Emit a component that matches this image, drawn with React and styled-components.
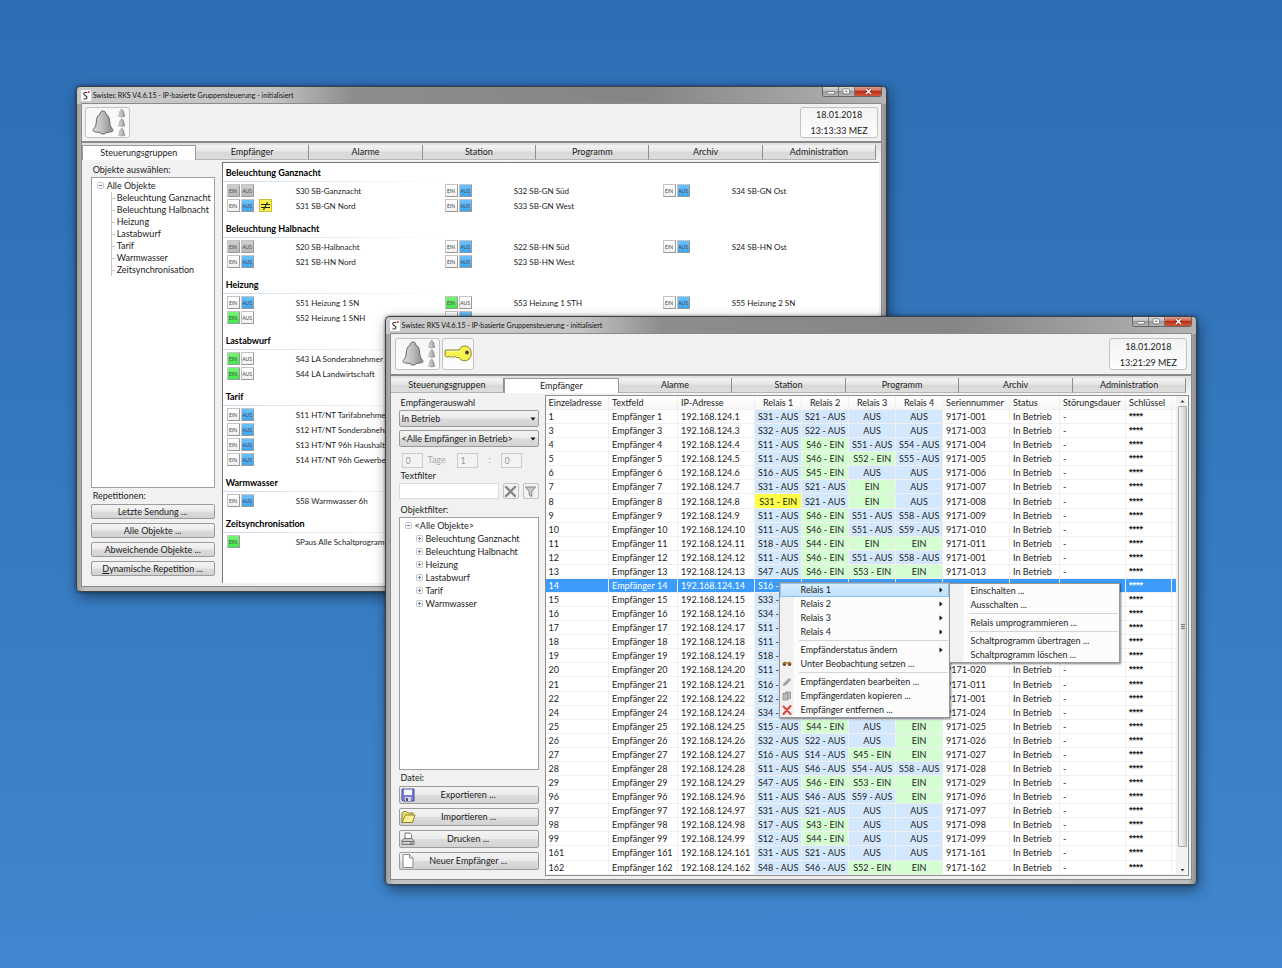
import React, { useState } from 'react'
import styled, { createGlobalStyle, css } from 'styled-components';

const tabs = ['Steuerungsgruppen', 'Empfänger', 'Alarme', 'Station', 'Programm', 'Archiv', 'Administration'];
const objects = ['Beleuchtung Ganznacht', 'Beleuchtung Halbnacht', 'Heizung', 'Lastabwurf', 'Tarif', 'Warmwasser'];

// state: 'aus' | 'ein' | 'off' (both grey) | 'single' (only EIN)
const groups = [
    { title: 'Beleuchtung Ganznacht', items: [
        ['S30 SB-Ganznacht', 'off'], ['S32 SB-GN Süd', 'aus'], ['S34 SB-GN Ost', 'aus'],
        ['S31 SB-GN Nord', 'aus', true], ['S33 SB-GN West', 'aus'],
    ] },
    { title: 'Beleuchtung Halbnacht', items: [
        ['S20 SB-Halbnacht', 'off'], ['S22 SB-HN Süd', 'aus'], ['S24 SB-HN Ost', 'aus'],
        ['S21 SB-HN Nord', 'aus'], ['S23 SB-HN West', 'aus'],
    ] },
    { title: 'Heizung', items: [
        ['S51 Heizung 1 SN', 'aus'], ['S53 Heizung 1 STH', 'ein'], ['S55 Heizung 2 SN', 'aus'],
        ['S52 Heizung 1 SNH', 'ein'], ['', 'aus'],
    ] },
    { title: 'Lastabwurf', single: true, items: [['S43 LA Sonderabnehmer', 'ein'], ['S44 LA Landwirtschaft', 'ein']] },
    { title: 'Tarif', single: true, items: [
        ['S11 HT/NT Tarifabnehmer', 'aus'], ['S12 HT/NT Sonderabnehmer', 'aus'],
        ['S13 HT/NT 96h Haushalt', 'aus'], ['S14 HT/NT 96h Gewerbe', 'aus'],
    ] },
    { title: 'Warmwasser', single: true, items: [['S58 Warmwasser 6h', 'aus']] },
    { title: 'Zeitsynchronisation', single: true, items: [['SPaus Alle Schaltprogramme', 'single']] },
];

const receivers = [
    [1, '001', 'S31 - AUS', 'S21 - AUS', 'AUS', 'AUS'],
    [3, '003', 'S32 - AUS', 'S22 - AUS', 'AUS', 'AUS'],
    [4, '004', 'S11 - AUS', 'S46 - EIN', 'S51 - AUS', 'S54 - AUS'],
    [5, '005', 'S11 - AUS', 'S46 - EIN', 'S52 - EIN', 'S55 - AUS'],
    [6, '006', 'S16 - AUS', 'S45 - EIN', 'AUS', 'AUS'],
    [7, '007', 'S31 - AUS', 'S21 - AUS', 'EIN', 'AUS'],
    [8, '008', 'S31 - EIN', 'S21 - AUS', 'EIN', 'AUS'],
    [9, '009', 'S11 - AUS', 'S46 - EIN', 'S51 - AUS', 'S58 - AUS'],
    [10, '010', 'S11 - AUS', 'S46 - EIN', 'S51 - AUS', 'S59 - AUS'],
    [11, '011', 'S18 - AUS', 'S44 - EIN', 'EIN', 'EIN'],
    [12, '001', 'S11 - AUS', 'S46 - EIN', 'S51 - AUS', 'S58 - AUS'],
    [13, '013', 'S47 - AUS', 'S46 - EIN', 'S53 - EIN', 'EIN'],
    [14, '', 'S16 - AUS', '', '', ''],
    [15, '', 'S33 - AUS', '', '', ''],
    [16, '', 'S34 - AUS', '', '', ''],
    [17, '', 'S11 - AUS', '', '', ''],
    [18, '', 'S11 - AUS', '', '', ''],
    [19, '', 'S18 - AUS', '', '', ''],
    [20, '020', 'S11 - AUS', '', '', ''],
    [21, '011', 'S16 - AUS', '', '', ''],
    [22, '001', 'S12 - AUS', '', '', ''],
    [24, '024', 'S34 - AUS', '', '', ''],
    [25, '025', 'S15 - AUS', 'S44 - EIN', 'AUS', 'EIN'],
    [26, '026', 'S32 - AUS', 'S22 - AUS', 'AUS', 'EIN'],
    [27, '027', 'S16 - AUS', 'S14 - AUS', 'S45 - EIN', 'EIN'],
    [28, '028', 'S11 - AUS', 'S46 - AUS', 'S54 - AUS', 'S58 - AUS'],
    [29, '029', 'S47 - AUS', 'S46 - EIN', 'S53 - EIN', 'EIN'],
    [96, '096', 'S11 - AUS', 'S46 - AUS', 'S59 - AUS', 'EIN'],
    [97, '097', 'S31 - AUS', 'S21 - AUS', 'AUS', 'AUS'],
    [98, '098', 'S17 - AUS', 'S43 - EIN', 'AUS', 'AUS'],
    [99, '099', 'S12 - AUS', 'S44 - EIN', 'AUS', 'AUS'],
    [161, '161', 'S31 - AUS', 'S21 - AUS', 'AUS', 'AUS'],
    [162, '162', 'S48 - AUS', 'S46 - AUS', 'S52 - EIN', 'EIN'],
];

function App() {
    return (
        <>
            <GlobalStyle />
            <Desktop>
                <GroupWindow />
                <ReceiverWindow />
            </Desktop>
        </>
    )
}

const TitleBar = () => (
    <Title>
        <AppIcon />
        <TitleText>Swistec RKS V4.6.15 - IP-basierte Gruppensteuerung - initialisiert</TitleText>
        <Controls>
            <Control aria-label='Minimieren'>
                <svg width='10' height='6'><rect x='1.5' y='2.5' width='7' height='2.5' rx='0.5' fill='#fff' stroke='#666' strokeWidth='0.7' /></svg>
            </Control>
            <Control aria-label='Maximieren'>
                <svg width='9' height='7'><rect x='1' y='0.8' width='6.5' height='5' rx='1' fill='#fff' stroke='#666' strokeWidth='0.7' /><rect x='3' y='2.6' width='2.5' height='1.4' fill='#888' /></svg>
            </Control>
            <Control $close aria-label='Schließen'>
                <svg width='9' height='7' viewBox='0 0 9 7'>
                    <path d='M2 1l5 5M7 1L2 6' stroke='#7c2416' strokeWidth='2.8' />
                    <path d='M2 1l5 5M7 1L2 6' stroke='#fff' strokeWidth='1.6' />
                </svg>
            </Control>
        </Controls>
    </Title>
)

const TabBar = ({ initial }) => {
    const [active, setActive] = useState(initial)
    return (
        <Tabs role='tablist'>
            {tabs.map((name) => (
                <Tab key={name} role='tab' aria-selected={active === name} $active={active === name} onClick={() => setActive(name)}>{name}</Tab>
            ))}
        </Tabs>
    )
}

const Clock = ({ time }) => (
    <ClockBox>
        <span>18.01.2018</span>
        <span>{time} MEZ</span>
    </ClockBox>
)

function GroupWindow() {
    return (
        <BackWindow>
            <TitleBar />
            <Client>
                <Toolbar>
                    <ToolButton $wide aria-label='Alarme'><BellIcon /></ToolButton>
                    <Clock time='13:13:33' />
                </Toolbar>
                <TabBar initial='Steuerungsgruppen' />
                <Body>
                    <Side>
                        <Label as='h2'>Objekte auswählen:</Label>
                        <TreeBox>
                            <TreeRoot><Expander />Alle Objekte</TreeRoot>
                            <TreeList>
                                {[...objects, 'Zeitsynchronisation'].map((el) => <TreeLeaf key={el}>{el}</TreeLeaf>)}
                            </TreeList>
                        </TreeBox>
                        <Label as='h2'>Repetitionen:</Label>
                        <ButtonStack>
                            <PushButton>Letzte Sendung ...</PushButton>
                            <PushButton>Alle Objekte ...</PushButton>
                            <PushButton>Abweichende Objekte ...</PushButton>
                            <PushButton><u>D</u>ynamische Repetition ...</PushButton>
                        </ButtonStack>
                    </Side>
                    <GroupPane>
                        {groups.map((group) => (
                            <section key={group.title}>
                                <GroupTitle>{group.title}</GroupTitle>
                                <GroupGrid $single={group.single}>
                                    {group.items.map((el, i) => <Switch key={i} props={el} />)}
                                </GroupGrid>
                            </section>
                        ))}
                    </GroupPane>
                </Body>
            </Client>
        </BackWindow>
    )
}

const Switch = (props) => {
    const [name, state, differs] = props.props;
    const ein = state === 'ein' || state === 'single' ? 'green' : state === 'off' ? 'grey' : 'white';
    const aus = state === 'aus' ? 'blue' : state === 'off' ? 'grey' : 'white';
    return (
        <SwitchItem>
            <SwitchKeys>
                <Key $tone={ein}>EIN</Key>
                {state !== 'single' && <Key $tone={aus}>AUS</Key>}
                {differs && (
                    <Differs>
                        <svg width='11' height='10' viewBox='0 0 11 10'><path d='M1 3.5h9M1 6.5h9M7.5 1L3.5 9' fill='none' stroke='#222' strokeWidth='1.1' /></svg>
                    </Differs>
                )}
            </SwitchKeys>
            <span>{name}</span>
        </SwitchItem>
    )
}

function ReceiverWindow() {
    const [text, setText] = useState('')
    const [selected, setSelected] = useState(14)

    return (
        <FrontWindow>
            <TitleBar />
            <Client>
                <Toolbar $tall>
                    <ToolButton $wide aria-label='Alarme'><BellIcon /></ToolButton>
                    <ToolButton aria-label='Schlüssel'><KeyIcon /></ToolButton>
                    <Clock time='13:21:29' />
                </Toolbar>
                <TabBar initial='Empfänger' />
                <Body>
                    <Side $wide>
                        <Label htmlFor='auswahl'>Empfängerauswahl</Label>
                        <SelectBox>
                            <select id='auswahl'><option>In Betrieb</option></select>
                            <Caret />
                        </SelectBox>
                        <SelectBox>
                            <select aria-label='Empfänger'><option>&lt;Alle Empfänger in Betrieb&gt;</option></select>
                            <Caret />
                        </SelectBox>
                        <DurationRow>
                            <input aria-label='Tage' defaultValue='0' disabled />
                            <span>Tage</span>
                            <input aria-label='Stunden' defaultValue='1' disabled />
                            <span>:</span>
                            <input aria-label='Minuten' defaultValue='0' disabled />
                        </DurationRow>
                        <Label htmlFor='textfilter'>Textfilter</Label>
                        <FilterRow>
                            <input id='textfilter' type='text' value={text} onChange={(e) => setText(e.target.value)} />
                            <IconButton aria-label='Filter löschen' onClick={() => setText('')}>
                                <svg width='13' height='13' viewBox='0 0 13 13'><path d='M2 2l9 9M11 2l-9 9' stroke='#858585' strokeWidth='2.4' strokeLinecap='round' /></svg>
                            </IconButton>
                            <IconButton aria-label='Filtern'>
                                <svg width='13' height='13' viewBox='0 0 13 13'><path d='M1.5 2h10L7.8 6.5v5l-2.6-1.5V6.5z' fill='#c9c9c9' stroke='#858585' /></svg>
                            </IconButton>
                        </FilterRow>
                        <Label as='h2'>Objektfilter:</Label>
                        <TreeBox>
                            <TreeRoot><Expander />&lt;Alle Objekte&gt;</TreeRoot>
                            <TreeList $open>
                                {objects.map((el) => <TreeLeaf $open key={el}><Expander plus />{el}</TreeLeaf>)}
                            </TreeList>
                        </TreeBox>
                        <Label as='h2'>Datei:</Label>
                        <ButtonStack $wide>
                            <PushButton><DiskIcon /><span>Exportieren ...</span></PushButton>
                            <PushButton><FolderIcon /><span>Importieren ...</span></PushButton>
                            <PushButton><PrinterIcon /><span>Drucken ...</span></PushButton>
                            <PushButton><PageIcon /><span>Neuer Empfänger ...</span></PushButton>
                        </ButtonStack>
                    </Side>
                    <TablePane>
                        <Table>
                            <colgroup>
                                {[63, 69, 77, 47, 47, 47, 47, 67, 50, 66, 46].map((w, i) => <col key={i} width={w} />)}
                                <col />
                            </colgroup>
                            <thead>
                                <tr>
                                    <th>Einzeladresse</th><th>Textfeld</th><th>IP-Adresse</th>
                                    <th className='relay'>Relais 1</th><th className='relay'>Relais 2</th>
                                    <th className='relay'>Relais 3</th><th className='relay'>Relais 4</th>
                                    <th>Seriennummer</th><th>Status</th><th>Störungsdauer</th><th>Schlüssel</th><th></th>
                                </tr>
                            </thead>
                            <tbody>
                                {receivers.map(([id, serial, ...relays]) => (
                                    <Row key={id} $selected={selected === id} onClick={() => setSelected(id)}>
                                        <td>{id}</td>
                                        <td>Empfänger {id}</td>
                                        <td>192.168.124.{id}</td>
                                        {relays.map((el, i) => (
                                            <RelayCell key={i} $ein={el.endsWith('EIN')} $warn={id === 8 && i === 0}>{el}</RelayCell>
                                        ))}
                                        <td>{serial && `9171-${serial}`}</td>
                                        <td>{serial && 'In Betrieb'}</td>
                                        <td>{serial && '-'}</td>
                                        <td className='secret'>****</td>
                                        <td></td>
                                    </Row>
                                ))}
                            </tbody>
                        </Table>
                        <ScrollBar>
                            <svg width='9' height='10'><path d='M2.5 6.5h4L4.5 4z' fill='#444' /></svg>
                            <Thumb><i /></Thumb>
                            <svg width='9' height='10'><path d='M2.5 4h4L4.5 6.5z' fill='#444' /></svg>
                        </ScrollBar>
                    </TablePane>
                </Body>
            </Client>
            <ContextMenu />
        </FrontWindow>
    )
}

const ContextMenu = () => (
    <>
        <Menu role='menu'>
            <MenuItem $hot>Relais 1<Arrow /></MenuItem>
            <MenuItem>Relais 2<Arrow /></MenuItem>
            <MenuItem>Relais 3<Arrow /></MenuItem>
            <MenuItem>Relais 4<Arrow /></MenuItem>
            <MenuLine />
            <MenuItem>Empfänderstatus ändern<Arrow /></MenuItem>
            <MenuItem><GlassesIcon />Unter Beobachtung setzen ...</MenuItem>
            <MenuLine />
            <MenuItem><PencilIcon />Empfängerdaten bearbeiten ...</MenuItem>
            <MenuItem><CopyIcon />Empfängerdaten kopieren ...</MenuItem>
            <MenuItem><DeleteIcon />Empfänger entfernen ...</MenuItem>
        </Menu>
        <Menu role='menu' $sub>
            <MenuItem>Einschalten ...</MenuItem>
            <MenuItem>Ausschalten ...</MenuItem>
            <MenuLine />
            <MenuItem>Relais umprogrammieren ...</MenuItem>
            <MenuLine />
            <MenuItem>Schaltprogramm übertragen ...</MenuItem>
            <MenuItem>Schaltprogramm löschen ...</MenuItem>
        </Menu>
    </>
)

// icons
const AppIcon = () => (
    <svg width='10' height='11' viewBox='0 0 10 11'>
        <rect width='10' height='11' rx='1' fill='#fff' />
        <path d='M6.2 2.8C4.5 1.7 2.3 2.5 2.8 4.2S6 5.7 6 7.5 4 9.3 2.5 8.7' fill='none' stroke='#333' strokeWidth='1.1' />
        <circle cx='7.8' cy='2' r='1.1' fill='#d33' />
    </svg>
)

const BellShape = ({ transform }) => (
    <path transform={transform} fill='url(#bell)' stroke='#666' strokeWidth='1'
        d='M11 1c1.8 0 3 1.2 2.8 3 3 1.5 3.7 4.5 3.9 8 .2 3.6 1 5 3 7.5.7 1-.2 2.2-1.4 2.3l-5.3.7c-.5 2-5.5 2-6 0l-5.300-.7C1.500 21.700.6 20.500 1.300 19.500c2-2.500 2.800-3.900 3-7.500.2-3.500.9-6.500 3.900-8C8 2.200 9.200 1 11 1z' />
)

const BellIcon = () => (
    <svg width='36' height='30' viewBox='0 0 36 30'>
        <defs>
            <linearGradient id='bell' x1='0' x2='1'>
                <stop offset='0' stopColor='#ddd' /><stop offset='0.5' stopColor='#bbb' /><stop offset='1' stopColor='#8c8c8c' />
            </linearGradient>
        </defs>
        <BellShape transform='translate(3 2)' />
        <BellShape transform='translate(29 1) scale(.34)' />
        <BellShape transform='translate(29 10.5) scale(.34)' />
        <BellShape transform='translate(29 20) scale(.34)' />
    </svg>
)

const KeyIcon = () => (
    <svg width='28' height='20' viewBox='0 0 28 20'>
        <path d='M15 6C16.5 1.8 22 .8 25 3.6c3 3 3 8.5 0 11.5-3 2.6-8.2 2.2-10-1.6h-2.5l-1.4-1.2-1.5 1.4-1.5-1.4-1.4 1.2-1.6-1.3-1.5 1.2L.8 11.5 1.5 6z' fill='#f8f250' stroke='#88852f' strokeWidth='1' />
        <path d='M2.5 7.5H16' stroke='#fdfbb0' />
        <circle cx='23' cy='8.5' r='2' fill='#444' />
    </svg>
)

const Expander = ({ plus }) => (
    <svg width='7' height='7' viewBox='0 0 7 7'>
        <rect x='0.5' y='0.5' width='6' height='6' rx='1' fill='#f8f8f8' stroke='#c4c4c4' />
        <path d={plus ? 'M2 3.5h3M3.5 2v3' : 'M2 3.5h3'} stroke='#6a7cae' />
    </svg>
)

const Caret = () => <svg width='6' height='4'><path d='M0.5 0.5h5L3 3.5z' fill='#111' /></svg>

const Arrow = () => <svg className='arrow' width='4' height='6'><path d='M0.5 0.5v5L3.5 3z' fill='#111' /></svg>

const DiskIcon = () => (
    <svg width='14' height='14' viewBox='0 0 14 14'>
        <path d='M1 1h12v12H2L1 12z' fill='#7c80d8' stroke='#4a4d9c' />
        <rect x='3' y='1.5' width='8' height='5.5' fill='#f4f5ff' />
        <rect x='4' y='9' width='6' height='4' fill='#dcdcdc' /><rect x='5' y='10' width='2' height='3' fill='#4a4d9c' />
    </svg>
)

const FolderIcon = () => (
    <svg width='15' height='14' viewBox='0 0 15 14'>
        <path d='M1 12.5V3l1.5-1.5h3L7 3h5v2' fill='#e8dd6c' stroke='#8e8432' />
        <path d='M1 12.5L4.5 5H14l-2.5 7.5z' fill='#f8f294' stroke='#8e8432' />
    </svg>
)

const PrinterIcon = () => (
    <svg width='14' height='14' viewBox='0 0 14 14'>
        <path d='M4 6.5V1h5l1.5 1.5v4' fill='#fff' stroke='#777' />
        <path d='M1 9l2-2.5h8L13 9v3.5H1z' fill='#c8c8c8' stroke='#777' />
        <path d='M1 9.5h12' stroke='#777' /><rect x='9' y='10.5' width='2.5' height='1.2' fill='#3b9c3b' />
    </svg>
)

const PageIcon = () => (
    <svg width='14' height='14' viewBox='0 0 14 14'>
        <path d='M2 0.5h6.5l3.5 3.5v9.5H2z' fill='#fff' stroke='#888' /><path d='M8.5 0.5V4H12' fill='#e6e6e6' stroke='#888' />
    </svg>
)

const GlassesIcon = () => (
    <svg className='icon' width='10' height='8' viewBox='0 0 10 8'>
        <path d='M1 4.5C1 2 3.5 2 4 3h2c.5-1 3-1 3 1.5' fill='none' stroke='#a8763c' strokeWidth='1.3' />
        <circle cx='2.5' cy='4.5' r='1.6' fill='#6c4a24' /><circle cx='7.5' cy='4.5' r='1.6' fill='#6c4a24' />
    </svg>
)

const PencilIcon = () => (
    <svg className='icon' width='10' height='10' viewBox='0 0 10 10'>
        <path d='M1.5 8.5l.5-2L7 1.5l1.5 1.5-5 5z' fill='#aaa' stroke='#777' strokeWidth='0.7' />
    </svg>
)

const CopyIcon = () => (
    <svg className='icon' width='10' height='10' viewBox='0 0 10 10'>
        <rect x='3.5' y='1' width='5' height='6.5' fill='#c4c4c4' stroke='#888' strokeWidth='0.7' />
        <rect x='1' y='2.5' width='5' height='6.5' fill='#bbb' stroke='#888' strokeWidth='0.7' />
    </svg>
)

const DeleteIcon = () => (
    <svg className='icon' width='10' height='10' viewBox='0 0 10 10'>
        <path d='M1.5 1.5l7 7.5M8.5 1L1.5 9' stroke='#dd4545' strokeWidth='2' strokeLinecap='round' />
    </svg>
)

export default App

const GlobalStyle = createGlobalStyle`
    *{
        box-sizing: border-box;
    }
    body{
        margin: 0;
        font-family: Lato, 'Liberation Sans', sans-serif;
        font-size: 9px;
        line-height: 14px;
        color: #1c1c1c;
    }
    button, input, select{
        font: inherit;
        color: inherit;
        margin: 0;
        padding: 0;
    }
    svg{
        display: block;
        flex: none;
    }
    h2, h3, ul{
        margin: 0;
        padding: 0;
        font-size: inherit;
        font-weight: normal;
        list-style: none;
    }
`
const Desktop = styled.main`
    position: relative;
    min-height: 100vh;
    overflow: hidden;
    background: linear-gradient(#2d6db3, #3478be 45%, #4087cf);
`
const Window = styled.section`
    position: absolute;
    border: 1px solid #3c4248;
    border-radius: 4px;
    padding: 0 4px 4px;
    background: linear-gradient(90deg, #c9c9c9, #c4c4c4 24%, #8d8d8d 34%, #858585 70%, #b4b4b4) 0 0 / 100% 17px no-repeat, linear-gradient(90deg, #9b9b9b, #c2c2c2 1%, #bdbdbd 99%, #8e8e8e);
    box-shadow: 0 0 3px rgba(0, 0, 0, 0.5), 2px 5px 14px rgba(0, 0, 0, 0.45);
`
const BackWindow = styled(Window)`
    left: 5.9vw;
    top: 86px;
    width: 63.3vw;
`
const FrontWindow = styled(Window)`
    left: 30vw;
    top: 316px;
    width: 63.4vw;
`
const Title = styled.header`
    display: flex;
    align-items: center;
    gap: 2px;
    height: 16px;
`
const TitleText = styled.span`
    flex: 1;
    font-size: 7px;
    color: #111;
`
const Controls = styled.div`
    display: flex;
    align-self: flex-start;
    border: 1px solid #666;
    border-top: 0;
    border-radius: 0 0 3px 3px;
    overflow: hidden;
`
const Control = styled.button`
    display: flex;
    align-items: center;
    justify-content: center;
    width: ${({$close}) => ($close ? '26px' : '16px')};
    height: 9px;
    border: 0;
    border-right: ${({$close}) => ($close ? '0' : '1px solid #777')};
    background: ${({$close}) => ($close
        ? 'linear-gradient(#e0a193, #cf5a45 45%, #bb2f18 50%, #d4573d)'
        : 'linear-gradient(#d6d6d6, #bcbcbc 45%, #9c9c9c 50%, #b4b4b4)')};
`
const Client = styled.div`
    border: 1px solid #8b8b8b;
    background: #f1f1f1;
`
const Toolbar = styled.div`
    display: flex;
    gap: 2px;
    height: ${({$tall}) => ($tall ? '42px' : '39px')};
    padding: ${({$tall}) => ($tall ? '4px' : '3px')};
    border-bottom: 2px solid #8a8a8a;
`
const ToolButton = styled.button`
    display: flex;
    align-items: center;
    justify-content: center;
    width: ${({$wide}) => ($wide ? '45px' : '32px')};
    border: 1px solid #c2c2c2;
    border-radius: 3px;
    background: linear-gradient(#f6f6f6, #fdfdfd);
`
const ClockBox = styled.div`
    display: flex;
    flex-direction: column;
    justify-content: center;
    align-items: center;
    width: 78px;
    margin-left: auto;
    padding-top: 1px;
    line-height: 16px;
    border: 1px solid #c2c2c2;
    border-radius: 3px;
    background: linear-gradient(#f3f3f3, #fdfdfd);
`
const Tabs = styled.div`
    display: flex;
    height: 19px;
    padding: 2px 5px 2px 0;
    background: linear-gradient(#e0e0e0, #f4f4f4);
`
const Tab = styled.button`
    flex: 1;
    border: 0;
    border-right: 1px solid #8f8f8f;
    border-bottom: 1px solid #b5b5b5;
    background: linear-gradient(#f3f3f3, #e6e6e6 45%, #d9d9d9 50%, #dcdcdc);
    ${({$active}) => $active && css`
        border: 1px solid #999;
        border-bottom: 0;
        background: #fff;
    `}
`
const Body = styled.div`
    display: flex;
    padding: 0 2px 3px 0;
`
const Side = styled.aside`
    display: flex;
    flex-direction: column;
    width: ${({$wide}) => ($wide ? '154px' : '140px')};
    padding: ${({$wide}) => ($wide ? '0 6px 6px 8px' : '0 7px 7px 9px')};
`
const Label = styled.label`
    display: block;
    padding-left: 2px;
    line-height: 15px;
`
const TreeBox = styled.div`
    flex: 1;
    padding: 1px 5px;
    border: 1px solid #9a9fa6;
    background: #fff;
`
const TreeRoot = styled.div`
    display: flex;
    align-items: center;
    gap: 3px;
    line-height: 13px;
`
const TreeList = styled.ul`
    margin-left: ${({$open}) => ($open ? '11px' : '14px')};
    line-height: ${({$open}) => ($open ? '13px' : '12px')};
    white-space: nowrap;
`
const TreeLeaf = styled.li`
    display: flex;
    align-items: center;
    gap: 3px;
    ${({$open}) => !$open && css`
        gap: 2px;
        border-left: 1px solid #c4c4c4;
        &::before{
            content: '';
            flex: none;
            width: 3px;
            border-top: 1px solid #c4c4c4;
        }
    `}
`
const ButtonStack = styled.div`
    display: flex;
    flex-direction: column;
    gap: 4px;
    padding-top: 1px;
    button{
        height: ${({$wide}) => ($wide ? '18px' : '15px')};
    }
`
const PushButton = styled.button`
    display: flex;
    align-items: center;
    justify-content: center;
    border: 1px solid #9b9b9b;
    border-radius: 2px;
    background: linear-gradient(#f4f4f4, #ebebeb 48%, #dcdcdc 52%, #d2d2d2);
    svg{
        margin-left: 1px;
    }
    span{
        flex: 1;
        padding-right: 16px;
    }
`
const GroupPane = styled.div`
    flex: 1;
    min-width: 0;
    min-height: 421px;
    padding-top: 3px;
    border-top: 1px solid #777;
    border-left: 1px solid #777;
    background: #fff;
`
const GroupTitle = styled.h3`
    height: 16px;
    padding-left: 3px;
    background: linear-gradient(90deg, #cfdcec, #fff 34%) left bottom / 100% 1px no-repeat;
    font-weight: bold;
    color: #000;
`
const GroupGrid = styled.div`
    display: grid;
    grid-template-columns: ${({$single}) => ($single ? '1fr' : '218px 218px 1fr')};
    grid-auto-rows: 15px;
    padding: 1px 0 9px 4px;
`
const SwitchItem = styled.div`
    display: flex;
    align-items: center;
    font-size: 8px;
    line-height: 16px;
    white-space: nowrap;
`
const SwitchKeys = styled.div`
    display: flex;
    gap: 1px;
    width: 69px;
`
const tones = {
    green: 'linear-gradient(#7af27a, #44e84a)',
    blue: 'linear-gradient(#6cc2fa, #3fa6f3)',
    grey: 'linear-gradient(#cfcfcf, #b9b9b9)',
    white: 'linear-gradient(#fff, #f0f0f0)',
}
const Key = styled.button`
    width: 13px;
    height: 13px;
    border: 1px solid #c4c4c4;
    border-right-color: #999;
    border-bottom-color: #999;
    border-radius: 1px;
    background: ${({$tone}) => tones[$tone]};
    font-size: 5px;
    line-height: 10px;
    color: #444;
`
const Differs = styled.span`
    display: flex;
    align-items: center;
    justify-content: center;
    width: 13px;
    height: 13px;
    margin-left: 4px;
    border: 1px solid #c9bd3c;
    background: #f8ef49;
`
const SelectBox = styled.div`
    position: relative;
    height: 17px;
    margin-bottom: 3px;
    select{
        width: 100%;
        height: 17px;
        padding-left: 2px;
        border: 1px solid #9b9b9b;
        border-radius: 2px;
        background: linear-gradient(#f4f4f4, #ebebeb 48%, #dcdcdc 52%, #d2d2d2);
        appearance: none;
    }
    svg{
        position: absolute;
        top: 7px;
        right: 3px;
    }
`
const DurationRow = styled.div`
    display: grid;
    grid-template-columns: 21px 34px 21px 23px 21px;
    padding: 3px 0 0 3px;
    color: #aaa;
    input{
        height: 15px;
        min-width: 0;
        padding-left: 3px;
        border: 1px solid #ccc;
        background: #f3f3f3;
        color: #999;
    }
    span{
        padding-left: 5px;
    }
    span:last-of-type{
        padding-left: 11px;
    }
`
const FilterRow = styled.div`
    display: flex;
    gap: 4px;
    margin-bottom: 3px;
    input{
        flex: 1;
        min-width: 0;
        height: 16px;
        border: 1px solid #dcdcdc;
        background: #fff;
    }
`
const IconButton = styled.button`
    display: flex;
    align-items: center;
    justify-content: center;
    width: 16px;
    height: 16px;
    border: 1px solid #c2c2c2;
    border-radius: 2px;
    background: #f2f2f2;
`
const TablePane = styled.div`
    display: flex;
    flex: 1;
    min-width: 0;
    border: 1px solid #8e8e8e;
    background: #fff;
`
const Table = styled.table`
    flex: 1;
    height: 479px;
    table-layout: fixed;
    border-collapse: collapse;
    line-height: 13px;
    white-space: nowrap;
    th, td{
        padding: 0 0 0 3px;
        border-right: 1px solid #f0f0f0;
        border-bottom: 1px solid #f0f0f0;
        font-weight: normal;
        text-align: left;
    }
    th{
        background: linear-gradient(#fff, #f6f6f6);
    }
    th.relay{
        padding: 0;
        text-align: center;
    }
    td.secret{
        font-family: 'Liberation Sans', sans-serif;
        font-weight: bold;
    }
`
const RelayCell = styled.td`
    && {
        padding: 0;
        text-align: center;
    }
    background: ${({$ein, $warn}) => ($warn ? '#ffff45' : $ein ? '#d5fdd2' : '#d3e8fd')};
`
const Row = styled.tr`
    ${({$selected}) => $selected && css`
        color: #fff;
        td{
            background: #3b9cfc;
        }
    `}
`
const ScrollBar = styled.div`
    display: flex;
    flex-direction: column;
    width: 11px;
    padding: 0 1px;
    background: #f3f3f3;
`
const Thumb = styled.div`
    display: flex;
    align-items: center;
    justify-content: center;
    flex: 1;
    margin-bottom: 18px;
    border: 1px solid #a9a9a9;
    border-radius: 1px;
    background: linear-gradient(90deg, #f5f5f5, #e2e2e2 50%, #cdcdcd);
    i{
        width: 4px;
        height: 5px;
        background: repeating-linear-gradient(#777 0 1px, #ddd 1px 2px);
    }
`
const Menu = styled.div`
    position: absolute;
    left: ${({$sub}) => ($sub ? '563px' : '393px')};
    top: ${({$sub}) => ($sub ? '266px' : '265px')};
    width: 171px;
    border: 1px solid #979797;
    background: linear-gradient(90deg, #f1f1f1 13px, #fcfcfc 14px);
    box-shadow: 1px 1px 2px rgba(0, 0, 0, 0.5);
`
const MenuItem = styled.button.attrs({ role: 'menuitem' })`
    display: flex;
    align-items: center;
    position: relative;
    width: 100%;
    height: 14px;
    padding-left: 20px;
    border: 1px solid ${({$hot}) => ($hot ? '#8cc3ee' : 'transparent')};
    background: ${({$hot}) => ($hot ? 'linear-gradient(#d8ecfd, #bfe0fb)' : 'none')};
    .icon{
        position: absolute;
        left: 1px;
    }
    .arrow{
        margin: 0 5px 0 auto;
    }
`
const MenuLine = styled.div`
    height: 1px;
    margin: 1px 1px 2px 19px;
    background: #d5d5d5;
`
